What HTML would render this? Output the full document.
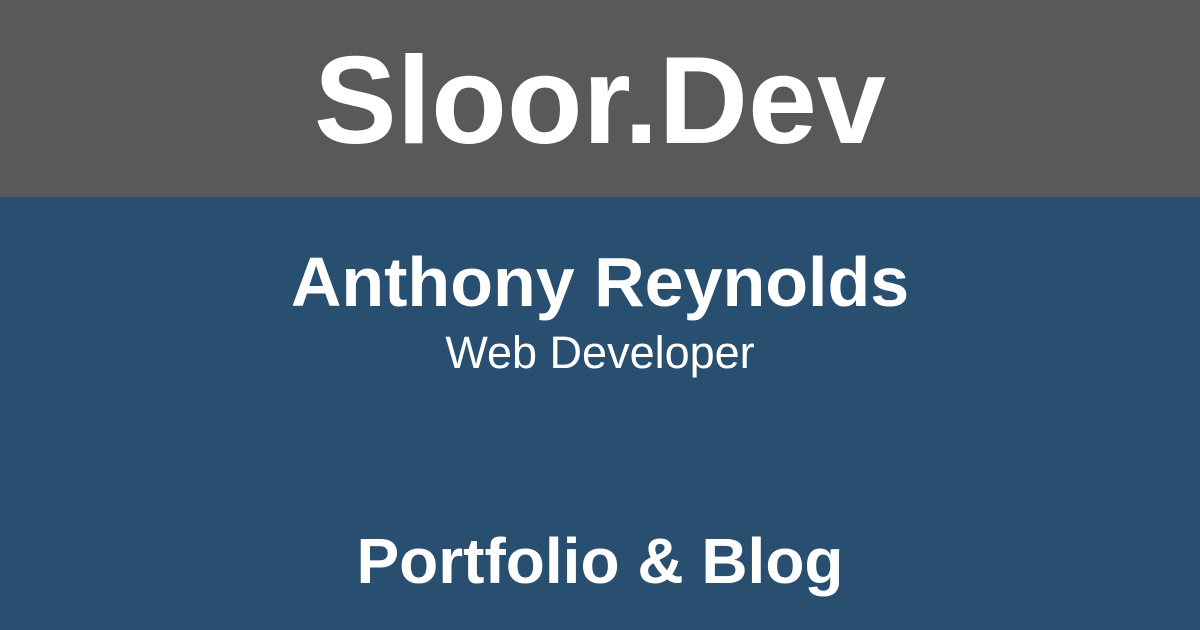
<!DOCTYPE html>
<html><head><meta charset="utf-8"><style>
body{margin:0;width:1200px;height:630px;overflow:hidden;font-family:"Liberation Sans",sans-serif;color:#fff}
.top{position:absolute;left:0;top:0;width:1200px;height:197px;background:#595959}
.bot{position:absolute;left:0;top:197px;width:1200px;height:433px;background:#284f6f}
.t{position:absolute;left:0;width:1200px;text-align:center;white-space:nowrap}
</style></head><body>
<div class="top"></div><div class="bot"></div>
<div class="t" style="top:31px;font-size:124px;font-weight:bold;line-height:140px">Sloor.Dev</div>
<div class="t" style="top:244px;font-size:70px;font-weight:bold;line-height:76px">Anthony Reynolds</div>
<div class="t" style="top:329px;font-size:45px;line-height:48px">Web Developer</div>
<div class="t" style="top:525px;font-size:64px;font-weight:bold;line-height:72px">Portfolio &amp; Blog</div>
</body></html>
